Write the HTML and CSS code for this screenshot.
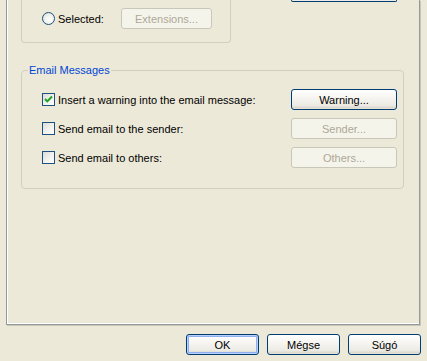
FILE: index.html
```html
<!DOCTYPE html>
<html lang="en">
<head>
    <meta charset="UTF-8">
    <title>Properties</title>
    <link rel="stylesheet" href="styles.css">
</head>
<body>
    <div class="page">
        <div class="top-row">
            <div class="group-tail">
                <div class="option-row">
                    <span class="radio"></span>
                    <span class="label">Selected:</span>
                    <button class="btn btn-ext" disabled>Extensions...</button>
                </div>
            </div>
            <div class="btn-stub"></div>
        </div>

        <fieldset class="group">
            <legend>Email Messages</legend>
            <div class="row">
                <label class="check-label">
                    <span class="checkbox checked">
                        <svg width="9" height="9" viewBox="0 0 9 9"><path d="M1 4 L3.3 6.4 L8 1.5" fill="none" stroke="#21a121" stroke-width="2"/></svg>
                    </span>
                    Insert a warning into the email message:
                </label>
                <button class="btn">Warning...</button>
            </div>
            <div class="row">
                <label class="check-label">
                    <span class="checkbox"></span>
                    Send email to the sender:
                </label>
                <button class="btn" disabled>Sender...</button>
            </div>
            <div class="row">
                <label class="check-label">
                    <span class="checkbox"></span>
                    Send email to others:
                </label>
                <button class="btn" disabled>Others...</button>
            </div>
        </fieldset>
    </div>

    <div class="dialog-buttons">
        <button class="btn btn-dlg default">OK</button>
        <button class="btn btn-dlg">Mégse</button>
        <button class="btn btn-dlg">Súgó</button>
    </div>
</body>
</html>
```

FILE: styles.css
```css
:root {
    --face: #ece9d8;
    --frame: #d0d0bf;
    --btn-border: #003c74;
    --dis-border: #c9c7ba;
    --dis-text: #aca899;
    --legend: #0046d5;
}

* {
    margin: 0;
    padding: 0;
    box-sizing: border-box;
}

body {
    background: var(--face);
    font-family: 'Liberation Sans', Arial, sans-serif;
    font-size: 11px;
    color: #000;
    width: 427px;
    height: 361px;
    overflow: hidden;
}

.page {
    margin-left: 6px;
    width: 414px;
    height: 325px;
    border: 1px solid #919b9c;
    border-top: none;
    box-shadow: inset 1px 0 #fff, inset 0 -1px #fff, 1px 1px 0 #c9c6b6;
    padding-left: 14px;
}

.top-row {
    display: flex;
    align-items: flex-start;
}

.group-tail {
    width: 210px;
    height: 43px;
    border: 1px solid var(--frame);
    border-top: none;
    border-radius: 0 0 4px 4px;
    padding: 8px 0 0 20px;
}

.option-row {
    display: flex;
    align-items: center;
    height: 21px;
}

.radio {
    width: 13px;
    height: 13px;
    border-radius: 50%;
    border: 1px solid #1c5180;
    background: radial-gradient(circle at 60% 60%, #fff 0%, #f2f2ee 45%, #d8d7cf 100%);
    margin-right: 3px;
}

.label {
    width: 63px;
}

.btn {
    font-family: inherit;
    font-size: 11px;
    color: #000;
    height: 21px;
    border: 1px solid var(--btn-border);
    border-radius: 3px;
    background: linear-gradient(#ffffff 0%, #f6f5f1 40%, #ecebe5 80%, #d6d0c5 100%);
    box-shadow: inset 0 -1px 0 #e3e0d4;
}

.btn:disabled {
    color: var(--dis-text);
    border-color: var(--dis-border);
    background: #f5f4ea;
    box-shadow: none;
}

.btn-ext {
    width: 91px;
}

.btn-stub {
    width: 106px;
    height: 2px;
    margin-left: 60px;
    border: 1px solid var(--btn-border);
    border-top: none;
    border-radius: 0 0 3px 3px;
    background: #ecebe5;
}

.group {
    width: 383px;
    margin-top: 21px;
    border: 1px solid var(--frame);
    border-radius: 4px;
    padding: 12px 6px 20px 20px;
    display: flex;
    flex-direction: column;
    gap: 8px;
}

.group legend {
    color: var(--legend);
    padding: 0 1px;
    margin-left: -14px;
    line-height: 13px;
}

.row {
    display: flex;
    align-items: center;
    justify-content: space-between;
    height: 21px;
}

.check-label {
    display: flex;
    align-items: center;
    gap: 3px;
}

.checkbox {
    width: 13px;
    height: 13px;
    border: 1px solid #1c5180;
    background: linear-gradient(135deg, #dcdcd7 0%, #f0f0ec 50%, #fff 100%);
    display: flex;
    align-items: center;
    justify-content: center;
    margin-top: -1px;
}

.row .btn {
    width: 106px;
}

.dialog-buttons {
    display: flex;
    justify-content: flex-end;
    gap: 8px;
    padding: 9px 6px 0 0;
}

.btn-dlg {
    width: 73px;
}

.btn-dlg.default {
    box-shadow: inset 0 0 0 1px #b9d1fa, inset 0 0 0 2px #8fb0ee;
}
```
